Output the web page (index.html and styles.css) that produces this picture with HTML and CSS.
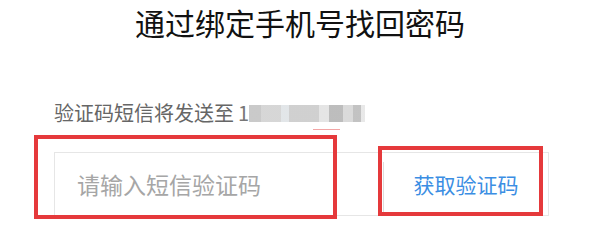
FILE: index.html
```html
<!DOCTYPE html>
<html lang="zh-CN">
<head>
    <meta charset="UTF-8">
    <meta name="viewport" content="width=device-width, initial-scale=1.0">
    <title>找回密码</title>
    <link rel="stylesheet" href="styles.css">
</head>
<body>

<div class="page">
    <h1 class="title">通过绑定手机号找回密码</h1>
    <div class="form">
        <p class="hint">验证码短信将发送至 <span class="phone">1</span><span class="mosaic"></span></p>
        <div class="code-row">
            <input type="text" class="code-input" placeholder="请输入短信验证码">
            <span class="divider"></span>
            <button type="button" class="send-btn">获取验证码</button>
        </div>
    </div>

    <!-- 标注框 -->
    <div class="mark mark-input"></div>
    <div class="mark mark-btn"></div>
    <div class="mark-line"></div>
</div>

</body>
</html>
```

FILE: styles.css
```css
body { margin: 0; background: #fff; font-family: "Noto Sans CJK SC", "Noto Sans", sans-serif; }
.page { position: relative; width: 600px; height: 237px; overflow: hidden; }
.title { margin: 0; font-size: 30px; line-height: 44px; font-weight: normal; color: #111; text-align: center; }
.form { padding-left: 54px; }
.hint { margin: 59px 0 0; font-size: 20px; line-height: 20px; color: #666; display: flex; align-items: center; }
.phone { color: #777; margin-left: 4px; }
.mosaic { display: inline-block; width: 116px; height: 17px; background: linear-gradient(90deg, #c4c4c4 0 12px, #d2d2d2 12px 32px, #dfe3e6 32px 40px, #cbcbcb 40px 70px, #e2e2e2 70px 80px, #b6b6b6 80px 94px, #d6d6d6 94px 104px, #bcbcbc 104px 112px, #e6e6e6 112px); opacity: 0.9; }
.code-row { margin-top: 29px; width: 495px; height: 64px; box-sizing: border-box; border: 1px solid #e6e6e6; display: flex; }
.code-input { width: 328px; box-sizing: border-box; border: none; outline: none; padding: 0 0 0 22px; font-family: inherit; font-size: 23px; color: #333; background: transparent; }
.code-input::placeholder { color: #a6a6a6; }
.divider { width: 1px; height: 52px; margin-top: 9px; background: #dcdcdc; }
.send-btn { flex: 1; border: none; background: none; padding: 0; font-family: inherit; font-size: 21px; color: #3b8ee3; cursor: pointer; }
.mark { position: absolute; border: 4px solid #e5393b; box-sizing: border-box; }
.mark-input { left: 34px; top: 135px; width: 303px; height: 84px; }
.mark-btn { left: 378px; top: 146px; width: 165px; height: 70px; }
.mark-line { position: absolute; left: 313px; top: 129px; width: 27px; height: 1px; background: #f2a5a5; }
```
